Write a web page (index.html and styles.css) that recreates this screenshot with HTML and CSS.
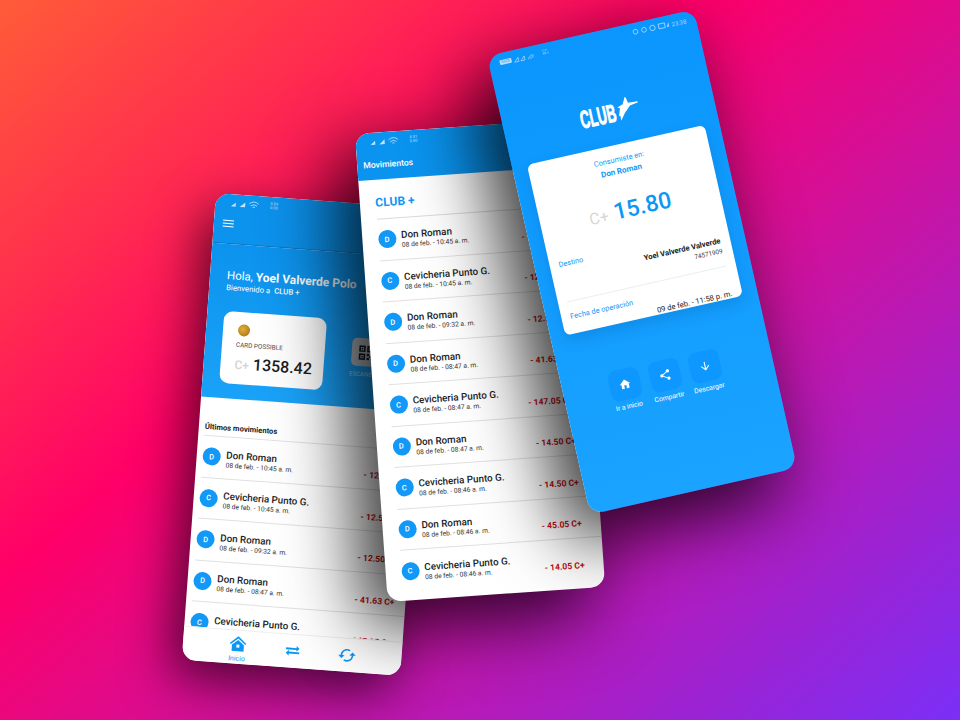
FILE: index.html
```html
<!DOCTYPE html>
<html lang="es">
<head>
  <meta charset="UTF-8">
  <meta name="viewport" content="width=device-width, initial-scale=1.0">
  <title>Club+</title>
  <link rel="stylesheet" href="styles.css">
</head>
<body>
  <main class="stage">

    <!-- home screen -->
    <section class="phone phone-home">
      <div class="home-top">
        <div class="status">
          <svg class="signal" viewBox="0 0 48 10"><path d="M1 9 7 4v5zM12 9l7-6v6z"/><path d="M24 4q6-5 12 0M26 6.5q4-3 8 0M28.5 8.5q1.5-1 3 0" fill="none" stroke="currentColor"/></svg>
          <span class="status-mini">5.84<br>0.00</span>
        </div>
        <div class="burger"><i></i><i></i><i></i></div>
      </div>
      <div class="greeting">
        <p class="hello">Hola, <b>Yoel Valverde Polo</b></p>
        <p class="welcome">Bienvenido a &nbsp;<b>CLUB +</b></p>
        <div class="balance-row">
          <div class="balance-card">
            <div class="coin"></div>
            <p class="card-name">CARD POSSIBLE</p>
            <p class="card-amount"><span>C+</span> 1358.42</p>
          </div>
          <div class="qr-col">
            <div class="qr-box">
              <svg viewBox="0 0 24 24"><path d="M3 3h8v8H3zm2 2v4h4V5zM13 3h8v8h-8zm2 2v4h4V5zM3 13h8v8H3zm2 2v4h4v-4zM6 6h2v2H6zM16 6h2v2h-2zM6 16h2v2H6zM13 13h3v3h-3zM18 13h3v3h-3zM16 16h2v2h-2zM13 18h3v3h-3zM18 18h3v3h-3z"/></svg>
            </div>
            <span>ESCANEAR</span>
          </div>
        </div>
      </div>
      <div class="home-list">
        <h2>Últimos movimientos</h2>
        <div class="row"><span class="avatar">D</span><div class="info"><b>Don Roman</b><small>08 de feb. - 10:45 a. m.</small></div><span class="amount">- 12.50 C+</span></div>
        <div class="row"><span class="avatar">C</span><div class="info"><b>Cevicheria Punto G.</b><small>08 de feb. - 10:45 a. m.</small></div><span class="amount">- 12.50 C+</span></div>
        <div class="row"><span class="avatar">D</span><div class="info"><b>Don Roman</b><small>08 de feb. - 09:32 a. m.</small></div><span class="amount">- 12.50 C+</span></div>
        <div class="row"><span class="avatar">D</span><div class="info"><b>Don Roman</b><small>08 de feb. - 08:47 a. m.</small></div><span class="amount">- 41.63 C+</span></div>
        <div class="row"><span class="avatar">C</span><div class="info"><b>Cevicheria Punto G.</b><small>08 de feb. - 08:47 a. m.</small></div><span class="amount">- 147.05 C+</span></div>
      </div>
      <nav class="tabs">
        <div class="tab">
          <svg class="tab-home" viewBox="0 0 24 24"><path d="M12 2 1 11.5 2.300 13 12 4.800 21.700 13 23 11.500z"/><path fill-rule="evenodd" d="M12 7 4 13.500V22h16v-8.500zM10 13h4v4h-4z"/></svg>
          <span>Inicio</span>
        </div>
        <div class="tab">
          <svg class="tab-swap" viewBox="0 0 24 24"><path d="M6.990 11 3 15l3.990 4v-3H21v-2.600H6.990zM21 9l-3.990-4v3H3v2.600h14.010V13z"/></svg>
        </div>
        <div class="tab">
          <svg class="tab-sync" viewBox="0 0 24 24"><path d="M12 4V1L8 5l4 4V6c3.310 0 6 2.690 6 6 0 1.010-.25 1.970-.7 2.800l1.460 1.460C19.540 15.030 20 13.570 20 12c0-4.420-3.580-8-8-8zm0 14c-3.310 0-6-2.690-6-6 0-1.010.25-1.970.7-2.800L5.240 7.740C4.460 8.970 4 10.430 4 12c0 4.420 3.580 8 8 8v3l4-4-4-4v3z"/></svg>
        </div>
      </nav>
    </section>

    <!-- movements list -->
    <section class="phone phone-list">
      <header class="list-head">
        <div class="status">
          <svg class="signal" viewBox="0 0 48 10"><path d="M1 9 7 4v5zM12 9l7-6v6z"/><path d="M24 4q6-5 12 0M26 6.5q4-3 8 0M28.5 8.5q1.5-1 3 0" fill="none" stroke="currentColor"/></svg>
          <span class="status-mini">4.31<br>0.00</span>
        </div>
        <h1>Movimientos</h1>
      </header>
      <div class="list-body">
        <h2 class="club-title">CLUB +</h2>
        <div class="row"><span class="avatar">D</span><div class="info"><b>Don Roman</b><small>08 de feb. - 10:45 a. m.</small></div><span class="amount">- 12.50 C+</span></div>
        <div class="row"><span class="avatar">C</span><div class="info"><b>Cevicheria Punto G.</b><small>08 de feb. - 10:45 a. m.</small></div><span class="amount">- 12.50 C+</span></div>
        <div class="row"><span class="avatar">D</span><div class="info"><b>Don Roman</b><small>08 de feb. - 09:32 a. m.</small></div><span class="amount">- 12.50 C+</span></div>
        <div class="row"><span class="avatar">D</span><div class="info"><b>Don Roman</b><small>08 de feb. - 08:47 a. m.</small></div><span class="amount">- 41.63 C+</span></div>
        <div class="row"><span class="avatar">C</span><div class="info"><b>Cevicheria Punto G.</b><small>08 de feb. - 08:47 a. m.</small></div><span class="amount">- 147.05 C+</span></div>
        <div class="row"><span class="avatar">D</span><div class="info"><b>Don Roman</b><small>08 de feb. - 08:47 a. m.</small></div><span class="amount">- 14.50 C+</span></div>
        <div class="row"><span class="avatar">C</span><div class="info"><b>Cevicheria Punto G.</b><small>08 de feb. - 08:46 a. m.</small></div><span class="amount">- 14.50 C+</span></div>
        <div class="row"><span class="avatar">D</span><div class="info"><b>Don Roman</b><small>08 de feb. - 08:46 a. m.</small></div><span class="amount">- 45.05 C+</span></div>
        <div class="row"><span class="avatar">C</span><div class="info"><b>Cevicheria Punto G.</b><small>08 de feb. - 08:46 a. m.</small></div><span class="amount">- 14.05 C+</span></div>
      </div>
    </section>

    <!-- receipt -->
    <section class="phone phone-receipt">
      <div class="receipt-status">
        <div class="status-left">
          <span class="volte">VoLTE</span>
          <svg viewBox="0 0 40 10"><path d="M1 9h6V3zM10 9h6V3zM21 9q4-7 9-4M24 9q2-3 5-2" fill="none" stroke="currentColor"/></svg>
          <span class="speed">0.21<br>KB/s</span>
        </div>
        <div class="status-right">
          <svg viewBox="0 0 48 10"><circle cx="4" cy="5" r="3" fill="none" stroke="currentColor"/><circle cx="15" cy="5" r="3" fill="none" stroke="currentColor"/><circle cx="26" cy="5" r="3.400" fill="none" stroke="currentColor"/><path d="M34 2h8v6h-8z" fill="none" stroke="currentColor"/><path d="M44 8l3-6v6z"/></svg>
          <span>23:38</span>
        </div>
      </div>
      <div class="logo">
        <span class="logo-text">CLUB</span>
        <svg class="logo-bird" viewBox="0 0 66 78"><path d="M26 4 29 6 36 22 64 17 66 20 42 30 34 42 27 52 16 76 13 60 9 62 12 38 4 36 20 26z"/></svg>
      </div>
      <div class="receipt-card">
        <p class="spent-label">Consumiste en:</p>
        <p class="spent-place">Don Roman</p>
        <p class="spent-amount"><span>C+</span> 15.80</p>
        <div class="detail detail-first">
          <span class="detail-label">Destino</span>
          <div class="detail-value"><b>Yoel Valverde Valverde</b><small>74571909</small></div>
        </div>
        <div class="detail">
          <span class="detail-label">Fecha de operación</span>
          <div class="detail-value"><em>09 de feb. - 11:58 p. m.</em></div>
        </div>
      </div>
      <div class="actions">
        <div class="action">
          <div class="action-btn"><svg viewBox="0 0 24 24"><path d="M10 20v-6h4v6h5v-8h3L12 3 2 12h3v8z"/></svg></div>
          <span>Ir a inicio</span>
        </div>
        <div class="action">
          <div class="action-btn"><svg viewBox="0 0 24 24"><path d="M18 16.080c-.76 0-1.440.3-1.960.77L8.910 12.700c.05-.23.09-.46.09-.7s-.04-.47-.09-.7l7.050-4.110c.54.5 1.250.81 2.040.81 1.660 0 3-1.340 3-3s-1.340-3-3-3-3 1.340-3 3c0 .24.04.47.09.7L8.040 9.810C7.500 9.310 6.790 9 6 9c-1.660 0-3 1.340-3 3s1.340 3 3 3c.79 0 1.500-.31 2.040-.81l7.120 4.160c-.05.21-.08.43-.08.65 0 1.610 1.310 2.920 2.920 2.920 1.610 0 2.920-1.310 2.920-2.920s-1.310-2.920-2.920-2.920z"/></svg></div>
          <span>Compartir</span>
        </div>
        <div class="action">
          <div class="action-btn"><svg viewBox="0 0 24 24"><path d="M20 12l-1.410-1.410L13 16.170V4h-2v12.170l-5.580-5.590L4 12l8 8 8-8z"/></svg></div>
          <span>Descargar</span>
        </div>
      </div>
    </section>

  </main>
</body>
</html>
```

FILE: styles.css
```css
* {
  box-sizing: border-box;
}
body {
  margin: 0;
  font-family: Roboto, "Liberation Sans", sans-serif;
  color: #1a1d24;
}
p, h1, h2 {
  margin: 0;
}
.stage {
  position: relative;
  width: 960px;
  height: 720px;
  overflow: hidden;
  background: linear-gradient(140deg, #ff5c38 0%, #ff2e4e 20%, #ff0068 38%, #7b2ff7 100%);
}

/* phones sit on the backdrop as free objects */
.phone {
  position: absolute;
  display: flex;
  flex-direction: column;
  overflow: hidden;
  background: #fff;
  border-radius: 14px;
  transform-origin: 0 0;
  box-shadow: -22px 22px 70px 4px rgba(0, 0, 0, 0.78);
}
.phone-home {
  left: 216px;
  top: 193px;
  width: 219px;
  height: 468px;
  transform: rotate(4.2deg);
  box-shadow: -10px 18px 50px rgba(0, 0, 0, 0.65);
}
.phone-list {
  left: 355px;
  top: 134px;
  width: 218px;
  height: 469px;
  transform: rotate(-4deg);
}
.phone-receipt {
  left: 487px;
  top: 56px;
  width: 212px;
  height: 470px;
  color: #fff;
  background: linear-gradient(180deg, #0a96fd 0%, #1aa3ff 100%);
  transform: rotate(-12.7deg);
}

/* status bars */
.status {
  display: flex;
  align-items: center;
  gap: 2px;
  height: 16px;
  padding: 2px 0 0 15px;
  color: rgba(255, 255, 255, 0.75);
}
.signal {
  width: 38px;
  height: 8px;
  fill: currentColor;
}
.status-mini {
  font-size: 4px;
  line-height: 4px;
}

/* home */
.home-top {
  height: 50px;
  border-bottom: 1px solid rgba(0, 40, 90, 0.28);
  background: #0c93ee;
}
.burger {
  display: flex;
  flex-direction: column;
  gap: 2px;
  width: 11px;
  margin: 10px 0 0 9px;
}
.burger i {
  display: block;
  height: 1px;
  background: #fff;
}
.greeting {
  flex: none;
  height: 154px;
  padding: 24px 0 0 17px;
  color: #fff;
  background: linear-gradient(180deg, #0c93ee 0%, #1aa2f8 100%);
}
.hello {
  font-size: 11.5px;
  line-height: 14px;
}
.hello b {
  font-size: 12px;
  font-weight: 700;
}
.welcome {
  font-size: 7.8px;
  line-height: 11px;
}
.welcome b {
  font-weight: 500;
}
.balance-row {
  display: flex;
  gap: 26px;
  margin: 18px 0 0 0;
}
.balance-card {
  flex: none;
  width: 103px;
  height: 72px;
  padding: 12px 0 0 14px;
  color: #1a1d24;
  background: #fff;
  border-radius: 9px;
}
.coin {
  width: 12px;
  height: 12px;
  margin-left: 1px;
  border-radius: 50%;
  background: radial-gradient(circle at 40% 40%, #e0b040 0%, #b87f16 70%, #8f6210 100%);
}
.card-name {
  margin-top: 5px;
  font-size: 6.4px;
  line-height: 8px;
  color: #444;
}
.card-amount {
  margin-top: 6px;
  font-size: 16px;
  font-weight: 500;
  line-height: 18px;
}
.card-amount span {
  font-size: 12px;
  color: #d4d4d4;
}
.qr-col {
  flex: none;
  display: flex;
  flex-direction: column;
  align-items: center;
  margin-top: 17px;
  font-size: 6px;
  color: rgba(255, 255, 255, 0.6);
}
.qr-box {
  display: flex;
  align-items: center;
  justify-content: center;
  width: 28px;
  height: 28px;
  margin-bottom: 4px;
  border-radius: 5px;
  background: #b9c1c7;
}
.qr-box svg {
  width: 19px;
  height: 19px;
  fill: #14181d;
}
.home-list {
  flex: 1;
  min-height: 0;
  overflow: hidden;
  padding-left: 6px;
}
.home-list h2 {
  margin-top: 24px;
  height: 15px;
  font-size: 7.6px;
  font-weight: 700;
  line-height: 12px;
  border-bottom: 1px solid #e2e2e2;
}
.tabs {
  flex: none;
  display: flex;
  justify-content: center;
  gap: 30px;
  height: 34px;
  background: #fff;
  border-top: 1px solid #eee;
}
.tab {
  display: flex;
  flex-direction: column;
  align-items: center;
  width: 25px;
  padding-top: 4px;
  font-size: 7px;
  color: #0d97f5;
}
.tab svg {
  fill: #0d97f5;
}
.tab-home {
  width: 18px;
  height: 18px;
}
.tab span {
  margin-top: 2px;
  line-height: 8px;
}
.tab-swap {
  width: 18px;
  height: 18px;
  margin-top: 3px;
}
.tab-sync {
  width: 19px;
  height: 19px;
  margin-top: 3px;
  transform: rotate(90deg);
}

/* movements */
.list-head {
  flex: none;
  height: 47px;
  color: #fff;
  background: #0a94f0;
}
.list-head .status {
  padding-left: 14px;
}
.list-head h1 {
  margin: 10px 0 0 6px;
  font-size: 8.6px;
  font-weight: 500;
  line-height: 12px;
}
.list-body {
  flex: 1;
  padding-left: 15.5px;
}
.club-title {
  height: 40px;
  padding-top: 15px;
  font-size: 12px;
  font-weight: 700;
  line-height: 16px;
  color: #0d97f5;
  border-bottom: 1px solid #dadada;
}

/* rows */
.row {
  display: flex;
  align-items: center;
  gap: 5.5px;
  height: 41.5px;
  padding-right: 11px;
  border-bottom: 1px solid #e0e0e0;
}
.phone-list .row {
  padding-right: 19px;
}
.phone-list .row:last-child {
  border-bottom: 0;
}
.avatar {
  flex: none;
  display: flex;
  align-items: center;
  justify-content: center;
  width: 18px;
  height: 18px;
  font-size: 7.5px;
  font-weight: 500;
  color: #fff;
  background: #1298f6;
  border-radius: 50%;
}
.info {
  display: flex;
  flex-direction: column;
  padding-top: 5px;
}
.phone-list .info {
  padding-top: 3px;
}
.info b {
  font-size: 9.8px;
  font-weight: 500;
  line-height: 11px;
}
.info small {
  font-size: 6.7px;
  line-height: 11px;
  color: #333;
}
.phone-list .info small {
  line-height: 10px;
}
.amount {
  margin-left: auto;
  padding-top: 14px;
  font-size: 8.6px;
  font-weight: 700;
  color: #c30d12;
  white-space: nowrap;
}
.phone-list .amount {
  padding-top: 13px;
}

/* receipt */
.receipt-status {
  display: flex;
  justify-content: space-between;
  align-items: center;
  height: 16px;
  padding: 2px 10px 0 11px;
  color: rgba(255, 255, 255, 0.65);
}
.status-left,
.status-right {
  display: flex;
  align-items: center;
  gap: 2px;
  font-size: 6px;
}
.status-left svg {
  width: 28px;
  height: 7px;
}
.status-right svg {
  width: 38px;
  height: 8px;
  fill: currentColor;
}
.volte {
  padding: 0 1px;
  font-size: 3.5px;
  line-height: 5px;
  color: #0b94fb;
  background: rgba(255, 255, 255, 0.7);
  border-radius: 1px;
}
.speed {
  font-size: 3px;
  line-height: 3.5px;
}
.logo {
  display: flex;
  align-items: flex-end;
  height: 34px;
  margin-top: 45px;
  padding-left: 77px;
}
.logo-text {
  flex: none;
  width: 37px;
  font-family: "Liberation Sans", sans-serif;
  font-size: 25px;
  font-weight: 700;
  line-height: 24px;
  -webkit-text-stroke: 1px #fff;
  transform: scaleX(0.52);
  transform-origin: 0 100%;
}
.logo-bird {
  flex: none;
  width: 22px;
  height: 26px;
  transform: rotate(12.7deg);
  fill: #fff;
}
.receipt-card {
  flex: none;
  height: 175px;
  margin: 20px 15px 0;
  padding-top: 9px;
  color: #1a1d24;
  background: #fff;
  border-radius: 6px;
  box-shadow: 0 6px 14px rgba(0, 60, 140, 0.18);
}
.spent-label,
.spent-place {
  font-size: 7.4px;
  line-height: 12px;
  text-align: center;
  color: #1298f6;
}
.spent-place {
  font-size: 8px;
  font-weight: 700;
}
.spent-amount {
  margin-top: 20px;
  font-size: 23px;
  font-weight: 500;
  line-height: 26px;
  text-align: center;
  color: #0d97f5;
}
.spent-amount span {
  font-size: 16px;
  font-weight: 400;
  color: #d6d6d6;
}
.detail {
  display: flex;
  justify-content: space-between;
  padding: 0 10px 0 9px;
}
.detail-first {
  height: 44px;
  margin-top: 17px;
}
.detail + .detail {
  padding-top: 8px;
  border-top: 1px solid #eee;
  margin: 0 10px 0 9px;
  padding-left: 0;
  padding-right: 0;
}
.detail-label {
  font-size: 7.4px;
  line-height: 14px;
  color: #1298f6;
}
.detail-value {
  display: flex;
  flex-direction: column;
  align-items: flex-end;
  padding-top: 14px;
}
.detail-value b {
  font-size: 7.6px;
  font-weight: 700;
  line-height: 10px;
}
.detail-value small {
  font-size: 6.4px;
  line-height: 10px;
  color: #444;
}
.detail-value em {
  font-size: 7.6px;
  font-style: normal;
  line-height: 12px;
}
.actions {
  display: flex;
  justify-content: center;
  gap: 9px;
  margin: 45px 6px 0 0;
}
.action {
  display: flex;
  flex-direction: column;
  align-items: center;
  width: 32px;
  font-size: 6.8px;
  white-space: nowrap;
}
.action-btn {
  display: flex;
  align-items: center;
  justify-content: center;
  width: 31px;
  height: 31px;
  margin-bottom: 3px;
  background: #0d97ff;
  border-radius: 8px;
}
.action-btn svg {
  width: 13px;
  height: 13px;
  fill: #fff;
}
```
